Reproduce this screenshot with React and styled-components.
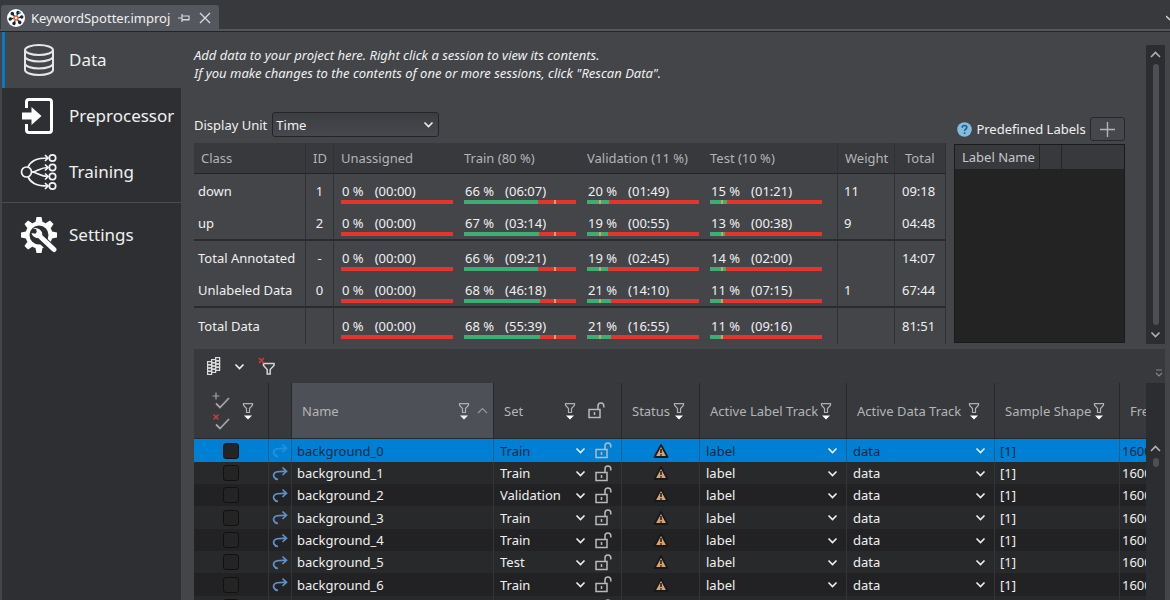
// Packages
import React, { useState } from "react"
import styled, { createGlobalStyle, css } from "styled-components"

// Variables
const Colors = {
    Frame: "#38393d",
    Panel: "#434549",
    Sidebar: "#2e2f33",
    Header: "#37393d",
    Tab: "#55575e",
    Line: "#2a2b2e",
    RowOdd: "#28292b",
    RowEven: "#222224",
    Blue: "#0080d4",
    Text: "#f0f0f0",
    Muted: "#b4b4b6",
    Red: "#e2352d",
    Green: "#3cae74",
    Tan: "#cfa36d",
}

// Data
const classes = [
    { name: "down", id: "1", sets: [[0, "00:00"], [66, "06:07"], [20, "01:49"], [15, "01:21"]], weight: "11", total: "09:18" },
    { name: "up", id: "2", sets: [[0, "00:00"], [67, "03:14"], [19, "00:55"], [13, "00:38"]], weight: "9", total: "04:48", ruled: true },
    { name: "Total Annotated", id: "-", sets: [[0, "00:00"], [66, "09:21"], [19, "02:45"], [14, "02:00"]], weight: "", total: "14:07" },
    { name: "Unlabeled Data", id: "0", sets: [[0, "00:00"], [68, "46:18"], [21, "14:10"], [11, "07:15"]], weight: "1", total: "67:44", ruled: true },
    { name: "Total Data", id: "", sets: [[0, "00:00"], [68, "55:39"], [21, "16:55"], [11, "09:16"]], weight: "", total: "81:51" },
]

const targets = [null, 80, 11, 10]

const sessions = ["Train", "Train", "Validation", "Train", "Train", "Test", "Train", "Train"].map((set, i) => ({
    name: `background_${i}`,
    set,
}))

// Styles
const GlobalStyle = createGlobalStyle`
    * {
        box-sizing: border-box;
    }

    body {
        margin: 0;
        background-color: ${Colors.Panel};
        color: ${Colors.Text};
        font-family: "Noto Sans", "Open Sans", sans-serif;
        font-size: 13px;
        line-height: 18px;
    }

    button,
    select,
    input {
        font: inherit;
        color: inherit;
        margin: 0;
    }

    button {
        background: none;
        border: none;
        padding: 0;
        display: flex;
        align-items: center;
        justify-content: center;
    }

    svg {
        display: block;
        flex: none;
    }
`

const Window = styled.div`
    height: 100vh;
    display: flex;
    flex-direction: column;
    overflow: hidden;
`

const TabBar = styled.header`
    height: 32px;
    flex: none;
    padding: 5px 0 0 1px;
    display: flex;
    align-items: stretch;
    justify-content: space-between;
    background-color: ${Colors.Frame};
    border-bottom: 1px solid #242528;
    box-shadow: inset 0 -2px 0 ${Colors.Tab};
`

const FileTab = styled.div`
    display: flex;
    align-items: center;
    gap: 6px;
    padding: 0 8px 1px 6px;
    border-radius: 3px 3px 0 0;
    background-color: ${Colors.Tab};

    button:first-of-type {
        margin: 0 3px 0 2px;
    }
`

const Body = styled.div`
    flex: 1;
    min-height: 0;
    display: flex;
    padding-left: 2px;
`

const Sidebar = styled.nav`
    width: 179px;
    flex: none;
    background-color: ${Colors.Sidebar};
`

const NavItem = styled.a`
    height: 56px;
    display: flex;
    align-items: center;
    gap: 12px;
    padding-left: 14px;
    border-left: 3px solid transparent;
    color: ${Colors.Text};
    font-size: 17px;
    line-height: 24px;
    text-decoration: none;

    &.active {
        border-color: #0a78c2;
        background-color: ${Colors.Panel};
    }
`

const NavGroup = styled.div`
    &:first-child {
        padding-bottom: 2px;
    }

    & + & {
        border-top: 1px solid #4a4b4f;
        padding-top: 4px;
    }
`

const Main = styled.main`
    flex: 1;
    min-width: 0;
    display: flex;
    flex-direction: column;
    gap: 5px;
    padding: 13px 5px 0 13px;
`

const Overview = styled.section`
    flex: none;
    display: flex;
    gap: 21px;
`

const OverviewContent = styled.div`
    flex: 1;
    min-width: 0;
    padding-top: 1px;
`

const Intro = styled.p`
    margin: 0 0 30px;
    font-style: italic;
`

const Columns = styled.div`
    display: flex;
    align-items: flex-end;
    gap: 8px;
`

const Statistics = styled.div`
    flex: 1;
    min-width: 0;
`

const UnitRow = styled.div`
    display: flex;
    align-items: center;
    gap: 5px;
    margin-bottom: 6px;
`

const SelectWrap = styled.span`
    display: grid;
    align-items: center;
    flex: 1;
    min-width: 0;

    select,
    svg {
        grid-area: 1 / 1;
    }

    select {
        width: 100%;
        height: 22px;
        padding: 0 20px 0 0;
        border: none;
        background: none;
        appearance: none;
    }

    option {
        color: ${Colors.Text};
        background-color: ${Colors.RowOdd};
    }

    svg {
        justify-self: end;
        pointer-events: none;
    }

    ${({ $boxed }) =>
        $boxed &&
        css`
            flex: none;
            width: 167px;

            select {
                height: 25px;
                padding-left: 3px;
                border: 1px solid #242528;
                border-radius: 3px;
                background: linear-gradient(#3c3e42, #46484d);
            }

            svg {
                margin-right: 5px;
            }
        `}
`

const StatTable = styled.table`
    width: 100%;
    table-layout: fixed;
    border-collapse: separate;
    border-spacing: 0;

    th,
    td {
        padding: 0;
        text-align: left;
        white-space: nowrap;
    }

    thead th {
        height: 31px;
        padding-left: 7px;
        color: ${Colors.Muted};
        background-color: ${Colors.Header};
        border-bottom: 1px solid #232427;
        font-weight: 400;
    }

    thead th:last-child {
        padding-left: 10px;
    }

    tbody th {
        padding-left: 4px;
        font-weight: 400;
    }

    tbody tr:last-child {
        height: 36px;
    }
`

const StatRow = styled.tr`
    height: ${({ $ruled }) => ($ruled ? 34 : 33)}px;

    & > * {
        border-bottom: ${({ $ruled }) => ($ruled ? `2px solid ${Colors.Line}` : "none")};
    }
`

const lined = css`
    && {
        border-right: 1px solid #303135;
    }
`

const StatHead = styled.th`
    ${({ $lined }) => $lined && lined}
`

const StatCell = styled.td`
    ${({ $lined }) => $lined && lined}

    &&& {
        text-align: ${({ $align }) => $align || "left"};
        padding-left: ${({ $pad }) => $pad || 0}px;
    }
`

const Share = styled.div`
    width: 112px;
    margin-left: 7px;
    padding-top: 4px;
`

const ShareText = styled.div`
    display: flex;
    gap: 11px;
    padding-left: 1px;
`

const Meter = styled.div`
    height: 4px;
    position: relative;
    background-color: ${Colors.Red};
`

const MeterFill = styled.div`
    height: 100%;
    background-color: ${Colors.Green};
`

const MeterTarget = styled.div`
    position: absolute;
    top: 0;
    width: 2px;
    height: 100%;
    background-color: ${Colors.Tan};
`

const Labels = styled.div`
    width: 171px;
    flex: none;
    align-self: stretch;
    display: flex;
    flex-direction: column;
    gap: 3px;
    padding: 5px 0 1px;
`

const LabelsTitle = styled.div`
    display: flex;
    align-items: center;
    justify-content: space-between;
    padding-left: 3px;

    button {
        width: 35px;
        height: 24px;
        border: 1px solid #27282b;
        border-radius: 3px;
        background-color: #45474c;
    }
`

const LabelsBox = styled.div`
    flex: 1;
    border: 1px solid #1a1a1b;
    background-color: #232324;
`

const LabelsTable = styled.table`
    width: 100%;
    table-layout: fixed;
    border-collapse: collapse;

    th {
        height: 24px;
        padding: 0 0 0 7px;
        text-align: left;
        white-space: nowrap;
        font-weight: 400;
        color: #c8c8ca;
        background-color: ${Colors.Header};
    }

    th + th {
        border-left: 1px solid #242528;
    }
`

const Scrollbar = styled.div`
    width: 19px;
    flex: none;
    display: flex;
    flex-direction: column;
    align-items: center;
    gap: 4px;
    padding: ${({ $top }) => $top}px 0 4px;
    background-color: #2c2d31;
`

const Thumb = styled.div`
    width: 6px;
    border-radius: 3px;
    background-color: #4d4f55;
    ${({ $short }) => ($short ? "height: 9px;" : "flex: 1;")}
`

const Sessions = styled.section`
    flex: 1;
    min-height: 0;
    display: flex;
    flex-direction: column;
    overflow: hidden;
`

const Toolbar = styled.div`
    height: 34px;
    flex: none;
    display: flex;
    align-items: center;
    gap: 13px;
    padding: 0 1px 0 13px;
    background-color: ${Colors.Header};

    button:last-child {
        margin: 14px 0 0 auto;
    }
`

const GridArea = styled.div`
    flex: 1;
    min-height: 0;
    display: flex;
`

const GridClip = styled.div`
    flex: 1;
    min-width: 0;
    overflow: hidden;
    background-color: ${Colors.RowEven};
`

const SessionTable = styled.table`
    width: 100%;
    table-layout: fixed;
    border-collapse: separate;
    border-spacing: 0;

    th,
    td {
        overflow: hidden;
        padding: 0;
        white-space: nowrap;
        text-align: left;
        font-weight: 400;
        border-right: 1px solid #343538;
    }

    tr > :last-child {
        border-right: none;
    }
`

const SessionHead = styled.th`
    height: 56px;
    color: ${Colors.Muted};
    background-color: ${({ $sorted }) => ($sorted ? "#4e5057" : Colors.Header)};

    && {
        border-right: 1px solid #27282b;
        border-bottom: 1px solid #27282b;
    }
`

const HeadContent = styled.div`
    display: flex;
    align-items: center;
    gap: ${({ $gap }) => $gap || 2}px;
    padding: 0 ${({ $end }) => $end || 14}px 0 10px;

    & > span {
        flex: 1;
    }
`

const MarkTools = styled.div`
    display: flex;
    align-items: center;
    gap: 12px;
    padding-left: 18px;
`

const MarkButtons = styled.div`
    display: grid;
    gap: 4px;
`

const SessionRow = styled.tr`
    height: 22px;
    background-color: ${Colors.RowEven};

    &:nth-child(3n + 1) {
        height: 23px;
    }

    &:nth-child(even) {
        background-color: ${Colors.RowOdd};
    }

    ${({ $selected }) =>
        $selected &&
        css`
            && {
                color: #10283c;
                background-color: ${Colors.Blue};
            }

            && td {
                border-color: #1a5f92;
            }
        `}
`

const CellContent = styled.div`
    display: flex;
    align-items: center;
    justify-content: ${({ $center }) => ($center ? "center" : "flex-start")};
    gap: 9px;
    height: 22px;
    padding: 0 ${({ $end }) => $end || 0}px 0 ${({ $start }) => $start || 0}px;
`

const Check = styled.input`
    appearance: none;
    width: 16px;
    height: 16px;
    border: 1px solid #111112;
    border-radius: 3px;
    background-color: #242425;
`

// Icons
const Stroke = ({ width, height, box, color = "#e6e6e6", weight = 1.5, children }) => (
    <svg
        width={width}
        height={height || width}
        viewBox={box || `0 0 ${width} ${height || width}`}
        fill="none"
        stroke={color}
        strokeWidth={weight}
        aria-hidden="true"
    >
        {children}
    </svg>
)

const Chevron = ({ up, color = "#f0f0f0", weight = 1.6, size = 11 }) => (
    <Stroke width={size} box="0 0 11 11" color={color} weight={weight}>
        <path d={up ? "M1 8l4.500-4.500L10 8" : "M1.500 3.500l4 4 4-4"} />
    </Stroke>
)

const ProjectIcon = () => (
    <svg width="18" height="18" viewBox="0 0 18 18" aria-hidden="true">
        <circle cx="9" cy="9" r="9" fill="#fff" />
        <g stroke="#1d2733" strokeWidth="1.300">
            {[20, 80, 140, 200, 260, 320].map(angle => (
                <g key={angle} transform={`rotate(${angle} 9 9)`}>
                    <path d="M9 6.500V3.500" />
                    <circle cx="9" cy="3.200" r="1.100" fill="#1d2733" />
                </g>
            ))}
        </g>
        <path d="M12 3l1.500 1.500" stroke="#3b8ed0" strokeWidth="2" />
        <circle cx="9" cy="9" r="2" fill="#fff" stroke="#df6733" strokeWidth="1.500" />
    </svg>
)

const PinIcon = () => (
    <Stroke width={12} height={10} color="#d8d8d8" weight={1.2}>
        <path d="M0 5h4M4 1v8M4 3h7v4H4M4 6.500h7" />
    </Stroke>
)

const CloseIcon = () => (
    <Stroke width={12} color="#d8d8d8" weight={1.4}>
        <path d="M1 1l10 10M11 1L1 11" />
    </Stroke>
)

const TabListIcon = () => (
    <Stroke width={4} height={8} color="#d8d8d8" weight={1.4}>
        <path d="M0 2l4 4" />
    </Stroke>
)

const DataIcon = () => (
    <Stroke width={38} weight={2}>
        <ellipse cx="20" cy="9" rx="14" ry="5" />
        <path d="M6 9v20c0 2.800 6.300 5 14 5s14-2.200 14-5V9" />
        <path d="M6 15.500c0 2.800 6.300 5 14 5s14-2.200 14-5M6 22.500c0 2.800 6.300 5 14 5s14-2.200 14-5" />
    </Stroke>
)

const PreprocessorIcon = () => (
    <Stroke width={38} color="#fff" weight={3}>
        <path d="M7.500 11V5q0-2.500 2.500-2.500h20q2.500 0 2.500 2.500v28q0 2.500-2.500 2.500H10q-2.500 0-2.500-2.500v-6" />
        <path d="M3 15.500h9.500V10l10 9-10 9v-5.500H3z" fill="#fff" stroke="none" />
    </Stroke>
)

const TrainingIcon = () => (
    <Stroke width={38} color="#f4f4f4" weight={1.7}>
        <circle cx="7.500" cy="19" r="5" />
        {[5, 14.5, 23.5, 33].map(y => (
            <g key={y}>
                <circle cx="33.500" cy={y} r="3.200" />
                <path d={`M26 ${y - 3}l3 3-3 3`} />
            </g>
        ))}
        <path d="M9 14C12 8 17 5 29 5M9 24c3 6 8 9 20 9M12.500 19c6 0 8-4.500 16.500-4.500M12.500 19c6 0 8 4.500 16.500 4.500" />
    </Stroke>
)

const SettingsIcon = () => (
    <svg width="38" height="38" viewBox="0 0 38 38" aria-hidden="true">
        <g fill="#fff">
            {[0, 45, 90, 135, 180, 225, 270, 315].map(angle => (
                <path key={angle} d="M16.500 6l1-5h5l1 5z" transform={`rotate(${angle} 20 19)`} />
            ))}
        </g>
        <circle cx="20" cy="19" r="11.500" fill="none" stroke="#fff" strokeWidth="4" />
        <path d="M20 21L35 35" stroke={Colors.Sidebar} strokeWidth="9" strokeLinecap="round" />
        <path d="M20 19.500L35 33.500" stroke="#fff" strokeWidth="5" strokeLinecap="round" />
        <path
            d="M13.500 12.800a6.600 6.600 0 0 1 9.500 7.500 6.400 6.400 0 0 1-10.500-3.300l3.800.7 1.500-1.600-.7-3z"
            fill="#fff"
        />
    </svg>
)

const HelpIcon = () => (
    <svg width="15" height="15" viewBox="0 0 15 15" fill="none" aria-hidden="true">
        <circle cx="7.500" cy="7.500" r="7.300" fill="#85bbdd" />
        <path d="M5.200 5.700c0-3 4.600-2.800 4.600-.2 0 1.700-2.200 1.700-2.200 3.500M7.600 10.300v1.700" stroke="#175f91" strokeWidth="1.600" />
    </svg>
)

const FilterIcon = () => (
    <svg width="12" height="18" viewBox="0 0 12 18" aria-hidden="true">
        <path d="M1.500 1.600h9v1.600L7.500 6.500v4h-3v-4l-3-3.300z" fill="none" stroke="#b0b0b2" strokeWidth="1.200" />
        <path d="M2 13.500h8L6 17.500z" fill="#fff" />
    </svg>
)

const ClearFilterIcon = () => (
    <Stroke width={17} height={18} weight={1.5} color="#d4d4d4">
        <path d="M5.500 6.500h10.500v2l-3.800 4v4.500h-3v-4.500L5.500 8.500z" />
        <path d="M1 1l5 5M6 1L1 6" stroke="#d53a33" />
    </Stroke>
)

const ColumnsIcon = () => (
    <svg width="14" height="18" viewBox="0 0 14 18" aria-hidden="true">
        {[[0, 4], [4, 2], [8, 0]].map(([x, y]) =>
            [0, 1, 2, 3].map(n => (
                <rect key={`${x}-${n}`} x={x + 0.6} y={y + n * 3.2 + 0.6} width="4" height="3.200" fill="none" stroke="#dcdcdc" strokeWidth="1.200" />
            ))
        )}
    </svg>
)

const MarkIcon = ({ remove }) => (
    <Stroke width={18} height={17} color="#a4a4a6" weight={1.8}>
        <path d="M4 11.500l4 4L17 6" />
        {remove ? (
            <path d="M1.500 1.500l5 5M6.500 1.500l-5 5" stroke="#c3403a" strokeWidth="1.500" />
        ) : (
            <path d="M4 .5v7M.5 4h7" strokeWidth="1.200" />
        )}
    </Stroke>
)

const LockIcon = () => (
    <Stroke width={17} height={17} color="#b9b9bb" weight={1.5}>
        <path d="M1 7.500h11v8H1zM10 7.500V4a2.800 2.800 0 0 1 5.800 0v1.500M6.500 10v3" />
    </Stroke>
)

const OpenIcon = ({ faded }) => (
    <Stroke width={16} height={15} color={faded ? "#2a8fd8" : "#5f91c4"} weight={1.7}>
        <path d="M6 13.500C2 13 .500 9.500 2.500 7 4 5 7 5.300 14 5.300M10.500 1.500l4 3.800-4 3.700" />
    </Stroke>
)

const WarningIcon = () => (
    <svg width="16" height="14" viewBox="0 0 16 14" role="img" aria-label="Warning">
        <path d="M8 1l6.500 12h-13z" fill="#d6a473" stroke="#191919" strokeWidth="1.800" strokeLinejoin="round" />
        <path d="M8 5v4M8 10.200v1.600" stroke="#191919" strokeWidth="1.500" />
    </svg>
)

const OverflowIcon = () => (
    <Stroke width={10} color="#85868a" weight={1.2}>
        <path d="M2 2h6M2 5l3 3 3-3" />
    </Stroke>
)

const navItems = [
    { text: "Data", icon: <DataIcon /> },
    { text: "Preprocessor", icon: <PreprocessorIcon /> },
    { text: "Training", icon: <TrainingIcon /> },
]

function Nav() {
    const [active, setActive] = useState("Data")
    const item = ({ text, icon }) => (
        <NavItem
            key={text}
            href={`#${text.toLowerCase()}`}
            className={active === text ? "active" : ""}
            onClick={() => setActive(text)}
        >
            {icon}
            {text}
        </NavItem>
    )

    return (
        <Sidebar>
            <NavGroup>{navItems.map(item)}</NavGroup>
            <NavGroup>{item({ text: "Settings", icon: <SettingsIcon /> })}</NavGroup>
        </Sidebar>
    )
}

function Select({ label, value, options, boxed, id }) {
    return (
        <SelectWrap $boxed={boxed}>
            <select id={id} aria-label={label} defaultValue={value}>
                {options.map(option => (
                    <option key={option}>{option}</option>
                ))}
            </select>
            <Chevron />
        </SelectWrap>
    )
}

function ShareCell({ percent, time, target, lined }) {
    return (
        <StatCell $lined={lined}>
            <Share>
                <ShareText>
                    <span>{percent} %</span>
                    <span>({time})</span>
                </ShareText>
                <Meter>
                    <MeterFill style={{ width: `${percent}%` }} />
                    {target && <MeterTarget style={{ left: `${target}%` }} />}
                </Meter>
            </Share>
        </StatCell>
    )
}

function ClassStatistics() {
    return (
        <StatTable>
            <colgroup>
                <col width="112" />
                <col width="28" />
                <col width="123" />
                <col width="123" />
                <col width="123" />
                <col />
                <col width="57" />
                <col width="51" />
            </colgroup>
            <thead>
                <tr>
                    <StatHead $lined>Class</StatHead>
                    <StatHead $lined>ID</StatHead>
                    <StatHead>Unassigned</StatHead>
                    <StatHead>Train (80 %)</StatHead>
                    <StatHead>Validation (11 %)</StatHead>
                    <StatHead $lined>Test (10 %)</StatHead>
                    <StatHead $lined>Weight</StatHead>
                    <StatHead $lined>Total</StatHead>
                </tr>
            </thead>
            <tbody>
                {classes.map(row => (
                    <StatRow key={row.name} $ruled={row.ruled}>
                        <StatHead scope="row" $lined>
                            {row.name}
                        </StatHead>
                        <StatCell $lined $align="center">
                            {row.id}
                        </StatCell>
                        {row.sets.map(([percent, time], i) => (
                            <ShareCell key={i} percent={percent} time={time} target={targets[i]} lined={i === 3} />
                        ))}
                        <StatCell $lined $pad={6}>
                            {row.weight}
                        </StatCell>
                        <StatCell $lined $pad={7}>
                            {row.total}
                        </StatCell>
                    </StatRow>
                ))}
            </tbody>
        </StatTable>
    )
}

function PredefinedLabels() {
    return (
        <Labels>
            <LabelsTitle>
                <HelpIcon />
                <span>Predefined Labels</span>
                <button aria-label="Add label">
                    <Stroke width={15} color="#b4b4b6" weight={1.4}>
                        <path d="M7.500 0v15M0 7.500h15" />
                    </Stroke>
                </button>
            </LabelsTitle>
            <LabelsBox>
                <LabelsTable>
                    <colgroup>
                        <col width="84" />
                        <col width="22" />
                        <col />
                    </colgroup>
                    <thead>
                        <tr>
                            <th>Label Name</th>
                            <th />
                            <th />
                        </tr>
                    </thead>
                </LabelsTable>
            </LabelsBox>
        </Labels>
    )
}

function FilterHead({ text, gap, end, children }) {
    return (
        <HeadContent $gap={gap} $end={end}>
            <span>{text}</span>
            <button aria-label={`Filter ${text}`}>
                <FilterIcon />
            </button>
            {children}
        </HeadContent>
    )
}

function SessionGrid() {
    return (
        <SessionTable>
            <colgroup>
                <col width="75" />
                <col width="23" />
                <col />
                <col width="128" />
                <col width="78" />
                <col width="147" />
                <col width="148" />
                <col width="125" />
                <col width="26" />
            </colgroup>
            <thead>
                <tr>
                    <SessionHead>
                        <MarkTools>
                            <MarkButtons>
                                <button aria-label="Check all">
                                    <MarkIcon />
                                </button>
                                <button aria-label="Uncheck all">
                                    <MarkIcon remove />
                                </button>
                            </MarkButtons>
                            <button aria-label="Filter checked">
                                <FilterIcon />
                            </button>
                        </MarkTools>
                    </SessionHead>
                    <SessionHead />
                    <SessionHead $sorted>
                        <FilterHead text="Name" gap={7} end={5}>
                            <Chevron up color="#98999d" weight={1.2} />
                        </FilterHead>
                    </SessionHead>
                    <SessionHead>
                        <FilterHead text="Set" gap={12} end={16}>
                            <button aria-label="Unlock all">
                                <LockIcon />
                            </button>
                        </FilterHead>
                    </SessionHead>
                    {["Status", "Active Label Track", "Active Data Track", "Sample Shape"].map(text => (
                        <SessionHead key={text}>
                            <FilterHead text={text} />
                        </SessionHead>
                    ))}
                    <SessionHead>
                        <HeadContent>Frequency</HeadContent>
                    </SessionHead>
                </tr>
            </thead>
            <tbody>
                {sessions.map((session, i) => (
                    <SessionRow key={session.name} $selected={i === 0}>
                        <td>
                            <CellContent $center>
                                <Check type="checkbox" aria-label={`Select ${session.name}`} />
                            </CellContent>
                        </td>
                        <td>
                            <CellContent $center>
                                <OpenIcon faded={i === 0} />
                            </CellContent>
                        </td>
                        <td>
                            <CellContent $start={5}>{session.name}</CellContent>
                        </td>
                        <td>
                            <CellContent $start={6} $end={9}>
                                <Select label="Set" value={session.set} options={["Train", "Validation", "Test"]} />
                                <LockIcon />
                            </CellContent>
                        </td>
                        <td>
                            <CellContent $center>
                                <WarningIcon />
                            </CellContent>
                        </td>
                        <td>
                            <CellContent $start={6} $end={8}>
                                <Select label="Active label track" value="label" options={["label"]} />
                            </CellContent>
                        </td>
                        <td>
                            <CellContent $start={6} $end={8}>
                                <Select label="Active data track" value="data" options={["data"]} />
                            </CellContent>
                        </td>
                        <td>
                            <CellContent $start={5}>[1]</CellContent>
                        </td>
                        <td>
                            <CellContent $start={2}>16000</CellContent>
                        </td>
                    </SessionRow>
                ))}
            </tbody>
        </SessionTable>
    )
}

function App() {
    return (
        <Window>
            <GlobalStyle />

            <TabBar>
                <FileTab>
                    <ProjectIcon />
                    <span>KeywordSpotter.improj</span>
                    <button aria-label="Pin tab">
                        <PinIcon />
                    </button>
                    <button aria-label="Close tab">
                        <CloseIcon />
                    </button>
                </FileTab>
                <button aria-label="List tabs">
                    <TabListIcon />
                </button>
            </TabBar>

            <Body>
                <Nav />

                <Main>
                    <Overview>
                        <OverviewContent>
                            <Intro>
                                Add data to your project here. Right click a session to view its contents.
                                <br />
                                If you make changes to the contents of one or more sessions, click "Rescan Data".
                            </Intro>

                            <Columns>
                                <Statistics>
                                    <UnitRow>
                                        <label htmlFor="unit">Display Unit</label>
                                        <Select id="unit" value="Time" options={["Time", "Samples"]} boxed />
                                    </UnitRow>
                                    <ClassStatistics />
                                </Statistics>

                                <PredefinedLabels />
                            </Columns>
                        </OverviewContent>

                        <Scrollbar $top={4}>
                            <Chevron up color="#b0b1b4" />
                            <Thumb />
                            <Chevron color="#b0b1b4" />
                        </Scrollbar>
                    </Overview>

                    <Sessions>
                        <Toolbar>
                            <button aria-label="Choose columns">
                                <ColumnsIcon />
                            </button>
                            <button aria-label="Column options">
                                <Chevron />
                            </button>
                            <button aria-label="Clear filters">
                                <ClearFilterIcon />
                            </button>
                            <button aria-label="More tools">
                                <OverflowIcon />
                            </button>
                        </Toolbar>

                        <GridArea>
                            <GridClip>
                                <SessionGrid />
                            </GridClip>
                            <Scrollbar $top={60}>
                                <Chevron up color="#b0b1b4" />
                                <Thumb $short />
                            </Scrollbar>
                        </GridArea>
                    </Sessions>
                </Main>
            </Body>
        </Window>
    )
}

export default App
